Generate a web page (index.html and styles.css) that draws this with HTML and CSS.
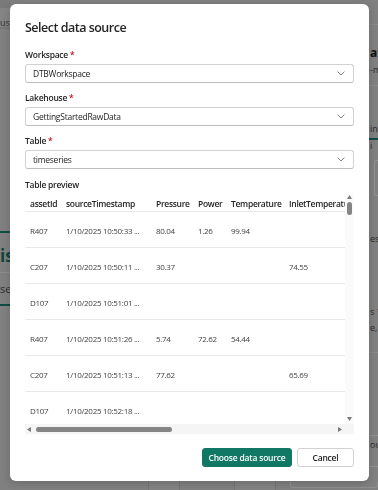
FILE: index.html
```html
<!DOCTYPE html>
<html lang="en">
<head>
<meta charset="utf-8">
<title>Select data source</title>
<link rel="stylesheet" href="styles.css">
</head>
<body>
<div class="page">
  <div class="bg-main">
    <div class="bg-left">
      <div class="bl-top"></div>
      <div class="bl-tab">us</div>
      <div class="bl-rule"></div>
      <div class="bl-green bl-green-a"></div>
      <div class="bl-head">is</div>
      <div class="bl-rule2"></div>
      <div class="bl-text">se</div>
      <div class="bl-green bl-green-b"></div>
    </div>
    <div class="bg-right">
      <div class="br-top"></div>
      <div class="br-head">at</div>
      <div class="br-sub">-m</div>
      <div class="br-rule"></div>
      <div class="br-tab">ing</div>
      <div class="br-green"></div>
      <div class="br-sub br-i">i</div>
      <div class="br-box"></div>
      <div class="br-sub br-es">es</div>
      <div class="br-sub br-s">s <span class="br-req">*</span></div>
      <div class="br-sub br-e">e,</div>
      <div class="br-rule br-rule-b"></div>
      <div class="br-box br-box-b"><span>ou</span></div>
    </div>
  </div>
  <div class="bg-bottom">
    <div class="bb-cell"></div>
    <div class="bb-cell bb-cell-b"></div>
    <div class="bb-cell bb-cell-c"></div>
    <div class="bb-box"></div>
  </div>
</div>

<div class="dialog" role="dialog" aria-label="Select data source">
  <h1 class="title">Select data source</h1>

  <div class="fields">
    <div class="field">
      <div class="label">Workspace <span class="req">*</span></div>
      <div class="select"><span class="select-value">DTBWorkspace</span><svg class="chev" viewBox="0 0 8 5" width="8" height="5"><path d="M0.6 0.6 L4 4 L7.4 0.6" fill="none" stroke="#616161" stroke-width="0.8"/></svg></div>
    </div>
    <div class="field">
      <div class="label">Lakehouse <span class="req">*</span></div>
      <div class="select"><span class="select-value">GettingStartedRawData</span><svg class="chev" viewBox="0 0 8 5" width="8" height="5"><path d="M0.6 0.6 L4 4 L7.4 0.6" fill="none" stroke="#616161" stroke-width="0.8"/></svg></div>
    </div>
    <div class="field">
      <div class="label">Table <span class="req">*</span></div>
      <div class="select"><span class="select-value">timeseries</span><svg class="chev" viewBox="0 0 8 5" width="8" height="5"><path d="M0.6 0.6 L4 4 L7.4 0.6" fill="none" stroke="#616161" stroke-width="0.8"/></svg></div>
    </div>
  </div>

  <div class="label preview-label">Table preview</div>
  <div class="preview">
    <div class="viewport">
      <table class="grid">
        <colgroup>
          <col class="c1"><col class="c2"><col class="c3"><col class="c4"><col class="c5"><col class="c6">
        </colgroup>
        <thead>
          <tr><th>assetId</th><th>sourceTimestamp</th><th>Pressure</th><th>Power</th><th>Temperature</th><th>InletTemperature</th></tr>
        </thead>
        <tbody>
          <tr><td>R407</td><td>1/10/2025 10:50:33 ...</td><td>80.04</td><td>1.26</td><td>99.94</td><td></td></tr>
          <tr><td>C207</td><td>1/10/2025 10:50:11 ...</td><td>30.37</td><td></td><td></td><td>74.55</td></tr>
          <tr><td>D107</td><td>1/10/2025 10:51:01 ...</td><td></td><td></td><td></td><td></td></tr>
          <tr><td>R407</td><td>1/10/2025 10:51:26 ...</td><td>5.74</td><td>72.62</td><td>54.44</td><td></td></tr>
          <tr><td>C207</td><td>1/10/2025 10:51:13 ...</td><td>77.62</td><td></td><td></td><td>65.69</td></tr>
          <tr><td>D107</td><td>1/10/2025 10:52:18 ...</td><td></td><td></td><td></td><td></td></tr>
        </tbody>
      </table>
    </div>
    <div class="vscroll">
      <svg class="arrow" viewBox="0 0 5 4" width="5" height="4"><path d="M2.5 0 L5 4 L0 4 Z" fill="#7a7a7a"/></svg>
      <div class="vthumb"></div>
      <div class="vspace"></div>
      <svg class="arrow" viewBox="0 0 5 4" width="5" height="4"><path d="M0 0 L5 0 L2.5 4 Z" fill="#7a7a7a"/></svg>
    </div>
    <div class="hscroll">
      <svg class="arrow" viewBox="0 0 4 5" width="4" height="5"><path d="M0 2.5 L4 0 L4 5 Z" fill="#7a7a7a"/></svg>
      <div class="hthumb"></div>
      <div class="hspace"></div>
      <svg class="arrow" viewBox="0 0 4 5" width="4" height="5"><path d="M0 0 L4 2.5 L0 5 Z" fill="#7a7a7a"/></svg>
    </div>
    <div class="corner"></div>
  </div>

  <div class="actions">
    <button class="btn btn-primary" type="button">Choose data source</button>
    <button class="btn btn-secondary" type="button">Cancel</button>
  </div>
</div>
</body>
</html>
```

FILE: styles.css
```css
* { box-sizing: border-box; }

html, body {
  margin: 0;
  padding: 0;
  width: 378px;
  height: 490px;
  overflow: hidden;
  font-family: "Open Sans", "Noto Sans", sans-serif;
  background: #808080;
}

/* ---------- dimmed page behind the dialog ---------- */
.page {
  width: 378px;
  height: 490px;
  display: flex;
  flex-direction: column;
  background: #808080;
}
.bg-main {
  flex: 1;
  display: flex;
  justify-content: space-between;
}
.bg-left {
  width: 10px;
  overflow: hidden;
  display: flex;
  flex-direction: column;
}
.bl-top { height: 8px; background: #7a7a7a; }
.bl-tab {
  height: 19px;
  background: #858585;
  font-size: 9px;
  line-height: 12px;
  padding-top: 9px;
  color: #333;
  white-space: nowrap;
}
.bl-rule { height: 2px; background: #777; }
.bl-green { height: 2px; background: #0f4d43; }
.bl-green-a { margin-top: 202px; }
.bl-head {
  margin-top: 13px;
  font-size: 17px;
  font-weight: 700;
  line-height: 20px;
  color: #0d463c;
  white-space: nowrap;
}
.bl-rule2 { margin-top: 6px; height: 1px; background: #8c8c8c; }
.bl-text {
  margin-top: 9px;
  font-size: 11px;
  line-height: 14px;
  color: #2c2c2c;
  white-space: nowrap;
}
.bl-green-b { margin-top: 8px; }

.bg-right {
  width: 9px;
  overflow: hidden;
  display: flex;
  flex-direction: column;
  padding-left: 1px;
}
.br-top { height: 25px; border-bottom: 1px solid #8a8a8a; margin-left: -2px; }
.br-head {
  margin-top: 21px;
  font-size: 12px;
  font-weight: 700;
  line-height: 14px;
  color: #111;
  white-space: nowrap;
}
.br-sub {
  font-size: 9px;
  line-height: 12px;
  color: #2a2a2a;
  white-space: nowrap;
}
.br-head + .br-sub { margin-top: 4px; }
.br-rule { margin-top: 9px; height: 1px; background: #8a8a8a; margin-left: -2px; }
.br-tab {
  margin-top: 37px;
  font-size: 9px;
  line-height: 12px;
  color: #2a2a2a;
  white-space: nowrap;
}
.br-green { margin-top: 3px; height: 2px; background: #0f4d43; margin-left: -2px; }
.br-i { margin-top: 0; }
.br-box {
  margin-top: 8px;
  margin-left: 4px;
  height: 36px;
  border: 1px solid #939393;
  border-right: 0;
  border-radius: 3px 0 0 3px;
}
.br-es { margin-top: 37px; }
.br-s { margin-top: 61px; }
.br-req { color: #8c1e24; }
.br-e { margin-top: 4px; }
.br-rule-b { margin-top: 18px; }
.br-box-b {
  margin-top: 82px;
  margin-left: -4px;
  height: 32px;
  font-size: 9px;
  line-height: 12px;
  color: #2a2a2a;
  padding-top: 3px;
  padding-left: 3px;
  white-space: nowrap;
}

.bg-bottom {
  height: 9px;
  display: flex;
  padding-left: 148px;
}
.bb-cell { width: 32px; border-left: 1px solid #767676; background: #838383; }
.bb-cell-b { width: 56px; background: #808080; }
.bb-cell-c { width: 42px; border-right: 1px solid #767676; background: #838383; }
.bb-box {
  margin-left: 14px;
  width: 90px;
  height: 6px;
  margin-top: 1px;
  border: 1px solid #8f8f8f;
  border-top: 0;
  border-radius: 0 0 3px 3px;
}

/* ---------- dialog ---------- */
.dialog {
  position: fixed;
  left: 10px;
  top: 4px;
  width: 359px;
  height: 477px;
  background: #fff;
  border-radius: 6px;
  box-shadow: 0 2px 8px rgba(0,0,0,0.18);
  padding: 16px 15px 14px;
  display: flex;
  flex-direction: column;
  color: #242424;
}

.title {
  margin: 0 0 13px;
  font-size: 12.5px;
  line-height: 16px;
  font-weight: 600;
  letter-spacing: -0.5px;
  color: #242424;
}

.fields {
  display: flex;
  flex-direction: column;
  gap: 9px;
}
.field {
  display: flex;
  flex-direction: column;
  gap: 3px;
}
.label {
  font-size: 8.5px;
  line-height: 12px;
  font-weight: 600;
  letter-spacing: -0.25px;
  color: #242424;
}
.req { color: #c50f1f; }

.select {
  height: 19px;
  border: 1px solid #d1d1d1;
  border-bottom-color: #bdbdbd;
  border-radius: 3px;
  display: flex;
  align-items: center;
  justify-content: space-between;
  padding: 0 8px 0 7px;
}
.select-value {
  font-size: 8.5px;
  line-height: 12px;
  letter-spacing: -0.25px;
  color: #242424;
}
.chev { display: block; }

.preview-label { margin-top: 10px; }

/* ---------- preview grid ---------- */
.preview {
  margin-top: 2px;
  height: 241px;
  display: grid;
  grid-template-columns: 320px 9px;
  grid-template-rows: 231px 10px;
}
.viewport {
  overflow: hidden;
  background: #fff;
}
.grid {
  table-layout: fixed;
  width: 339px;
  border-collapse: separate;
  border-spacing: 0;
  font-size: 8.5px;
}
.c1 { width: 36px; }
.c2 { width: 90px; }
.c3 { width: 42px; }
.c4 { width: 33px; }
.c5 { width: 58px; }
.c6 { width: 80px; }

.grid th, .grid td {
  text-align: left;
  white-space: nowrap;
  overflow: hidden;
  line-height: 12px;
  padding-left: 5px;
  border-bottom: 1px solid #e8e8e8;
}
.grid th {
  font-weight: 600;
  color: #242424;
  letter-spacing: -0.3px;
  padding-top: 5px;
  padding-bottom: 1px;
}
.grid td {
  font-weight: 400;
  font-size: 8px;
  letter-spacing: -0.3px;
  color: #424242;
  padding-top: 13px;
  padding-bottom: 10px;
}

.vscroll {
  background: #fafafa;
  display: flex;
  flex-direction: column;
  align-items: center;
  padding: 2px 0 3px;
}
.vthumb {
  margin-top: 3px;
  width: 5px;
  height: 13px;
  border-radius: 3px;
  background: #858585;
}
.vspace { flex: 1; }

.hscroll {
  background: #f5f5f5;
  display: flex;
  align-items: center;
  padding: 0 3px 0 2px;
}
.hthumb {
  margin-left: 5px;
  width: 136px;
  height: 5px;
  border-radius: 3px;
  background: #858585;
}
.hspace { flex: 1; }
.arrow { display: block; flex: none; }
.corner { background: #f5f5f5; }

/* ---------- actions ---------- */
.actions {
  margin-top: 14px;
  display: flex;
  justify-content: flex-end;
  gap: 5px;
}
.btn {
  height: 19px;
  border-radius: 3px;
  font-family: "Open Sans", "Noto Sans", sans-serif;
  font-size: 8.5px;
  font-weight: 600;
  letter-spacing: -0.2px;
  line-height: 12px;
  padding: 0;
  cursor: pointer;
}
.btn-primary {
  width: 90px;
  background: #117865;
  border: 1px solid #117865;
  color: #fff;
}
.btn-secondary {
  width: 57px;
  background: #fff;
  border: 1px solid #d1d1d1;
  color: #242424;
}
```
